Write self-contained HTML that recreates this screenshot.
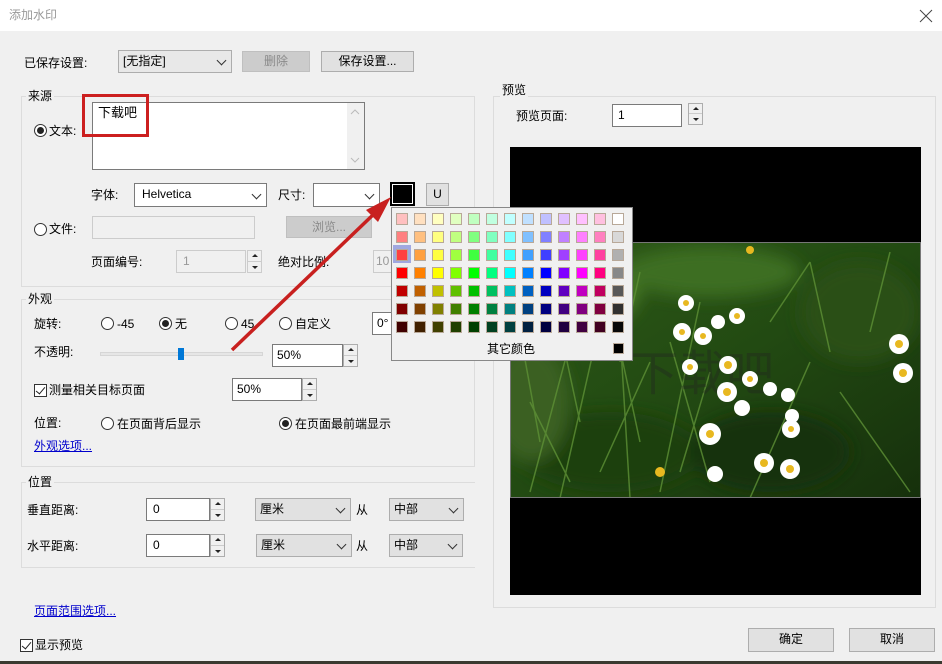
<!DOCTYPE html>
<html><head><meta charset="utf-8">
<style>
*{box-sizing:border-box;margin:0;padding:0}
body{width:942px;height:664px;overflow:hidden;background:#f0f0f0;font-family:"Liberation Sans","Noto Sans CJK SC",sans-serif;font-size:12px;color:#000;position:relative}
.a{position:absolute}
.t{position:absolute;white-space:nowrap;line-height:14px}
.box{position:absolute;background:#fff;border:1px solid #7a7a7a}
.dis{position:absolute;background:#f0f0f0;border:1px solid #ccc;color:#888}
.btn{position:absolute;background:#e1e1e1;border:1px solid #adadad;text-align:center;line-height:20px}
.gbtn{position:absolute;background:#cccccc;border:1px solid #bfbfbf;color:#8a8a8a;text-align:center;line-height:18px}
.combo{position:absolute;background:#fff;border:1px solid #7a7a7a;padding-left:7px;line-height:20px}
.gcombo{position:absolute;background:#e1e1e1;border:1px solid #adadad;padding-left:4px;line-height:20px}
.chev{position:absolute;right:6px;top:6px;width:7px;height:7px;border-right:1.3px solid #333;border-bottom:1.3px solid #333;transform:rotate(45deg)}
.grp{position:absolute;border:1px solid #dcdcdc}
.gl{position:absolute;background:#f0f0f0;padding:0 2px;line-height:14px}
.rad{position:absolute;width:13px;height:13px;border:1px solid #333;border-radius:50%;background:#fff}
.rad.on::after{content:"";position:absolute;left:2px;top:2px;width:7px;height:7px;border-radius:50%;background:#222}
.chk{position:absolute;width:13px;height:13px;border:1px solid #333;background:#fff}
.chk::after{content:"";position:absolute;left:3px;top:0px;width:4px;height:8px;border-right:1.3px solid #222;border-bottom:1.3px solid #222;transform:rotate(40deg)}
.spin{position:absolute;width:15px;border:1px solid #adadad;background:#f0f0f0}
.spin div{height:50%;border-bottom:1px solid #ccc;position:relative}
.spin div:last-child{border:0}
.up::after{content:"";position:absolute;left:4px;top:3px;border:3px solid transparent;border-bottom:3px solid #222;border-top:0}
.dn::after{content:"";position:absolute;left:4px;top:4px;border:3px solid transparent;border-top:3px solid #222;border-bottom:0}
.link{color:#0000cc;text-decoration:underline}
.sw{position:absolute;width:12px;height:12px;border:1px solid #b8a898}
</style></head><body>
<div class="a" style="left:0;top:0;width:942px;height:31px;background:#fff"></div>
<div class="t" style="left:9px;top:8px;color:#999;font-size:12px">添加水印</div>
<svg class="a" style="left:919px;top:9px" width="14" height="14"><path d="M1 1L13 13M13 1L1 13" stroke="#444" stroke-width="1"/></svg>

<div class="t" style="left:24px;top:56px">已保存设置:</div>
<div class="gcombo" style="left:118px;top:50px;width:114px;height:23px;background:#e8e8e8">[无指定]<div class="chev"></div></div>
<div class="gbtn" style="left:242px;top:51px;width:68px;height:21px">删除</div>
<div class="btn" style="left:321px;top:51px;width:93px;height:21px;line-height:19px">保存设置...</div>

<div class="grp" style="left:21px;top:96px;width:454px;height:191px"></div>
<div class="gl" style="left:26px;top:89px">来源</div>
<div class="rad on" style="left:34px;top:124px"></div>
<div class="t" style="left:49px;top:124px">文本:</div>
<div class="box" style="left:92px;top:102px;width:273px;height:68px"></div>
<div class="a" style="left:347px;top:103px;width:17px;height:66px;background:#f0f0f0"></div>
<svg class="a" style="left:350px;top:108px" width="10" height="58"><path d="M1 6L5 2L9 6M1 50L5 54L9 50" stroke="#bbb" fill="none"/></svg>
<div class="t" style="left:98px;top:106px;font-size:13px">下载吧</div>
<div class="a" style="left:82px;top:94px;width:67px;height:43px;border:3px solid #cc1f1f"></div>

<div class="t" style="left:91px;top:188px">字体:</div>
<div class="combo" style="left:134px;top:183px;width:133px;height:24px;line-height:21px">Helvetica<div class="chev" style="top:7px"></div></div>
<div class="t" style="left:278px;top:188px">尺寸:</div>
<div class="combo" style="left:313px;top:183px;width:67px;height:24px"><div class="chev" style="top:7px"></div></div>
<div class="a" style="left:390px;top:182px;width:25px;height:24px;background:#000;border:1px solid #000;outline:1px solid #fff;outline-offset:-3px"></div>
<div class="btn" style="left:426px;top:183px;width:23px;height:23px;font-size:12px">U</div>

<div class="rad" style="left:34px;top:223px"></div>
<div class="t" style="left:49px;top:222px">文件:</div>
<div class="dis" style="left:92px;top:216px;width:163px;height:23px"></div>
<div class="gbtn" style="left:286px;top:216px;width:86px;height:22px;line-height:20px">浏览...</div>

<div class="t" style="left:91px;top:255px">页面编号:</div>
<div class="dis" style="left:176px;top:250px;width:70px;height:23px;padding-left:6px;line-height:20px;color:#999">1</div>
<div class="spin" style="left:247px;top:250px;height:23px;border-color:#ccc"><div class="up"></div><div class="dn"></div></div>
<div class="t" style="left:278px;top:255px">绝对比例:</div>
<div class="dis" style="left:373px;top:250px;width:30px;height:23px;padding-left:2px;line-height:20px;color:#999">10</div>

<div class="grp" style="left:21px;top:299px;width:454px;height:168px"></div>
<div class="gl" style="left:26px;top:292px">外观</div>
<div class="t" style="left:34px;top:317px">旋转:</div>
<div class="rad" style="left:101px;top:317px"></div><div class="t" style="left:117px;top:317px">-45</div>
<div class="rad on" style="left:159px;top:317px"></div><div class="t" style="left:175px;top:317px">无</div>
<div class="rad" style="left:225px;top:317px"></div><div class="t" style="left:241px;top:317px">45</div>
<div class="rad" style="left:279px;top:317px"></div><div class="t" style="left:295px;top:317px">自定义</div>
<div class="box" style="left:372px;top:312px;width:30px;height:23px;padding-left:4px;line-height:20px">0°</div>

<div class="t" style="left:34px;top:345px">不透明:</div>
<div class="a" style="left:100px;top:352px;width:163px;height:4px;background:#e6e6e6;border:1px solid #d6d6d6"></div>
<div class="a" style="left:178px;top:348px;width:6px;height:12px;background:#0078d7"></div>
<div class="box" style="left:272px;top:344px;width:71px;height:23px;padding-left:4px;line-height:21px">50%</div>
<div class="spin" style="left:343px;top:344px;height:23px"><div class="up"></div><div class="dn"></div></div>

<div class="chk" style="left:34px;top:384px"></div>
<div class="t" style="left:49px;top:383px">测量相关目标页面</div>
<div class="box" style="left:232px;top:378px;width:70px;height:23px;padding-left:4px;line-height:20px">50%</div>
<div class="spin" style="left:302px;top:378px;height:23px"><div class="up"></div><div class="dn"></div></div>

<div class="t" style="left:34px;top:416px">位置:</div>
<div class="rad" style="left:101px;top:417px"></div><div class="t" style="left:117px;top:417px">在页面背后显示</div>
<div class="rad on" style="left:279px;top:417px"></div><div class="t" style="left:295px;top:417px">在页面最前端显示</div>
<div class="t link" style="left:34px;top:439px">外观选项...</div>

<div class="grp" style="left:21px;top:482px;width:454px;height:86px;border-right:0"></div>
<div class="gl" style="left:26px;top:475px">位置</div>
<div class="t" style="left:27px;top:503px">垂直距离:</div>
<div class="box" style="left:146px;top:498px;width:64px;height:23px;padding-left:6px;line-height:20px">0</div>
<div class="spin" style="left:210px;top:498px;height:23px"><div class="up"></div><div class="dn"></div></div>
<div class="gcombo" style="left:255px;top:498px;width:96px;height:23px">厘米<div class="chev"></div></div>
<div class="t" style="left:356px;top:503px">从</div>
<div class="gcombo" style="left:389px;top:498px;width:75px;height:23px">中部<div class="chev"></div></div>
<div class="t" style="left:27px;top:539px">水平距离:</div>
<div class="box" style="left:146px;top:534px;width:64px;height:23px;padding-left:6px;line-height:20px">0</div>
<div class="spin" style="left:210px;top:534px;height:23px"><div class="up"></div><div class="dn"></div></div>
<div class="gcombo" style="left:256px;top:534px;width:96px;height:23px">厘米<div class="chev"></div></div>
<div class="t" style="left:356px;top:539px">从</div>
<div class="gcombo" style="left:389px;top:534px;width:74px;height:23px">中部<div class="chev"></div></div>

<div class="t link" style="left:34px;top:604px">页面范围选项...</div>
<div class="chk" style="left:20px;top:639px"></div>
<div class="t" style="left:35px;top:638px">显示预览</div>

<div class="grp" style="left:493px;top:96px;width:443px;height:512px"></div>
<div class="gl" style="left:500px;top:83px">预览</div>
<div class="t" style="left:516px;top:109px">预览页面:</div>
<div class="box" style="left:612px;top:104px;width:70px;height:23px;padding-left:5px;line-height:20px">1</div>
<div class="spin" style="left:688px;top:103px;height:22px"><div class="up"></div><div class="dn"></div></div>
<div class="a" style="left:510px;top:147px;width:411px;height:448px;background:#000"></div>
<svg class="a" style="left:510px;top:242px" width="411" height="256">
<defs>
<linearGradient id="g" x1="0" y1="0" x2="1" y2="1"><stop offset="0" stop-color="#2e5a18"/><stop offset="0.5" stop-color="#224a12"/><stop offset="1" stop-color="#16300c"/></linearGradient>
<filter id="b"><feGaussianBlur stdDeviation="8"/></filter>
</defs>
<rect width="411" height="256" fill="url(#g)"/>
<g filter="url(#b)">
<ellipse cx="60" cy="50" rx="70" ry="40" fill="#4a7a26"/>
<ellipse cx="200" cy="30" rx="90" ry="25" fill="#3e6e22"/>
<ellipse cx="350" cy="70" rx="60" ry="50" fill="#2a5018"/>
<ellipse cx="100" cy="210" rx="90" ry="40" fill="#1e4010"/>
<ellipse cx="260" cy="210" rx="80" ry="40" fill="#14300a"/>
<ellipse cx="20" cy="160" rx="40" ry="60" fill="#3a6020"/>
</g>
<g stroke="#5e9036" stroke-width="1.5" opacity="0.8" fill="none">
<path d="M20 250L60 100M50 256L90 80M120 256L110 90M150 250L190 60M200 240L160 100M240 256L300 120M90 230L140 120M30 200L10 90M260 80L300 20M330 150L400 250M70 180L40 40M110 120L130 30M130 200L100 60M60 240L20 160M170 230L200 130M300 20L320 110M380 10L360 90M10 60L60 10"/>
</g>
<g font-family="Noto Sans CJK SC,sans-serif" font-size="48" fill="#222" opacity="0.35"><text x="120" y="148">下载吧</text></g>
<g fill="#fff">
<circle cx="176" cy="61" r="8"/><circle cx="227" cy="74" r="8"/><circle cx="172" cy="90" r="9"/><circle cx="193" cy="94" r="9"/>
<circle cx="208" cy="80" r="7"/><circle cx="389" cy="102" r="10"/><circle cx="218" cy="123" r="9"/><circle cx="180" cy="125" r="8"/>
<circle cx="240" cy="137" r="8"/><circle cx="217" cy="150" r="10"/><circle cx="260" cy="147" r="7"/><circle cx="278" cy="153" r="7"/>
<circle cx="393" cy="131" r="10"/><circle cx="232" cy="166" r="8"/><circle cx="282" cy="174" r="7"/><circle cx="200" cy="192" r="11"/>
<circle cx="281" cy="187" r="9"/><circle cx="254" cy="221" r="10"/><circle cx="280" cy="227" r="10"/><circle cx="205" cy="232" r="8"/>
</g>
<g fill="#e8b820">
<circle cx="176" cy="61" r="3"/><circle cx="227" cy="74" r="3"/><circle cx="172" cy="90" r="3"/><circle cx="193" cy="94" r="3"/>
<circle cx="389" cy="102" r="4"/><circle cx="218" cy="123" r="4"/><circle cx="180" cy="125" r="3"/><circle cx="240" cy="137" r="3"/>
<circle cx="217" cy="150" r="4"/><circle cx="393" cy="131" r="4"/><circle cx="200" cy="192" r="4"/><circle cx="281" cy="187" r="3"/>
<circle cx="254" cy="221" r="4"/><circle cx="280" cy="227" r="4"/><circle cx="100" cy="20" r="4"/><circle cx="150" cy="230" r="5"/><circle cx="240" cy="8" r="4"/>
</g>
<rect x="0.5" y="0.5" width="410" height="255" fill="none" stroke="#777"/>
</svg>

<div class="btn" style="left:748px;top:628px;width:86px;height:24px">确定</div>
<div class="btn" style="left:849px;top:628px;width:86px;height:24px">取消</div>
<div class="a" style="left:0;top:661px;width:942px;height:3px;background:#3a3a30"></div>

<svg class="a" style="left:0;top:0" width="942" height="664">
<path d="M232 350L376 212" stroke="#c8201f" stroke-width="3.5" fill="none"/>
<path d="M391 197L366 210L378 222Z" fill="#c8201f"/>
</svg>

<div class="a" style="left:391px;top:207px;width:242px;height:154px;background:#f0f0f0;border:1px solid #888"></div>
<div class="a" style="left:393px;top:245px;width:18px;height:18px;background:#a0a8e0"></div>
<div id="pal"></div>
<div class="t" style="left:487px;top:342px">其它颜色</div>
<div class="a" style="left:613px;top:343px;width:11px;height:11px;background:#000;border:1px solid #b8a898"></div>
<script>
var c=[
"ffc0c0 ffe0c0 ffffc0 e0ffc0 c0ffc0 c0ffe0 c0ffff c0e0ff c0c0ff e0c0ff ffc0ff ffc0e0 ffffff",
"ff8080 ffc080 ffff80 c0ff80 80ff80 80ffc0 80ffff 80c0ff 8080ff c080ff ff80ff ff80c0 d8d8d8",
"ff4040 ffa040 ffff40 a0ff40 40ff40 40ffa0 40ffff 40a0ff 4040ff a040ff ff40ff ff40a0 b0b0b0",
"ff0000 ff8000 ffff00 80ff00 00ff00 00ff80 00ffff 0080ff 0000ff 8000ff ff00ff ff0080 888888",
"c00000 c06000 c0c000 60c000 00c000 00c060 00c0c0 0060c0 0000c0 6000c0 c000c0 c00060 585858",
"800000 804000 808000 408000 008000 008040 008080 004080 000080 400080 800080 800040 303030",
"400000 402000 404000 204000 004000 004020 004040 002040 000040 200040 400040 400020 080808"];
var h="";
for(var r=0;r<7;r++){var a=c[r].split(" ");for(var i=0;i<13;i++){h+='<div class="sw" style="left:'+(396+i*18)+'px;top:'+(213+r*18)+'px;background:#'+a[i]+'"></div>';}}
document.getElementById("pal").innerHTML=h;
</script>
</body></html>
